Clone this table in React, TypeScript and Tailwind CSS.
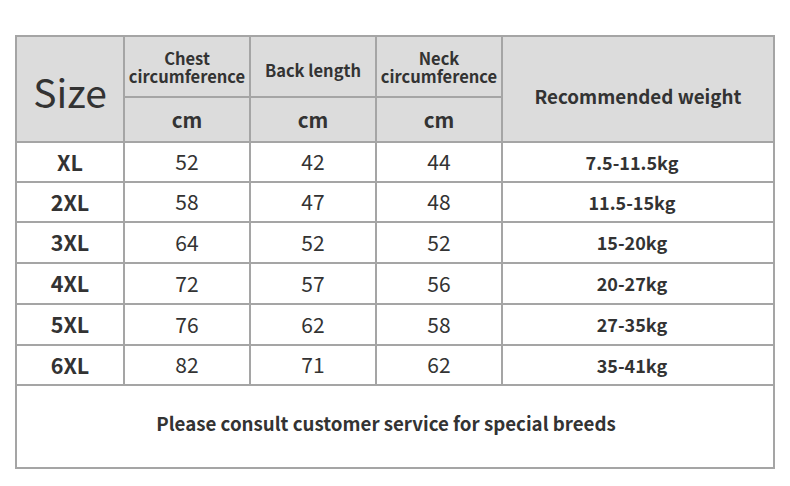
const rows = [
  { size: "XL", chest: "52", back: "42", neck: "44", weight: "7.5-11.5kg", h: "h-[38px]" },
  { size: "2XL", chest: "58", back: "47", neck: "48", weight: "11.5-15kg", h: "h-[38px]" },
  { size: "3XL", chest: "64", back: "52", neck: "52", weight: "15-20kg", h: "h-[39px]" },
  { size: "4XL", chest: "72", back: "57", neck: "56", weight: "20-27kg", h: "h-[39px]" },
  { size: "5XL", chest: "76", back: "62", neck: "58", weight: "27-35kg", h: "h-[39px]" },
  { size: "6XL", chest: "82", back: "71", neck: "62", weight: "35-41kg", h: "h-[38px]" },
];

const font = { fontFamily: '"Noto Sans CJK SC", "Noto Sans", sans-serif' };

export default function App() {
  return (
    <div className="w-[790px] h-[486px] bg-white pt-[35px] pl-[15px] text-[#333]" style={font}>
      <div className="grid grid-cols-[106px_124px_124px_124px_270px] gap-[2px] p-[2px] bg-[#a5a5a5] w-[760px]">
        {/* header */}
        <div className="row-span-2 bg-[#dcdcdc] flex items-center justify-center text-[39px] leading-none pt-[4px]">
          Size
        </div>
        <div className="h-[59px] bg-[#dcdcdc] flex items-center justify-center text-center text-[16.5px] font-bold leading-[18px]">
          <p>
            Chest
            <br />
            circumference
          </p>
        </div>
        <div className="h-[59px] bg-[#dcdcdc] flex items-center justify-center text-[16.5px] font-bold pt-[8px]">
          Back length
        </div>
        <div className="h-[59px] bg-[#dcdcdc] flex items-center justify-center text-center text-[16.5px] font-bold leading-[18px]">
          <p>
            Neck
            <br />
            circumference
          </p>
        </div>
        <div className="row-span-2 bg-[#dcdcdc] flex items-center justify-center text-[18.8px] font-bold pt-[14px]">
          Recommended weight
        </div>
        <div className="h-[43px] bg-[#dcdcdc] flex items-center justify-center text-[20.5px] font-bold">cm</div>
        <div className="h-[43px] bg-[#dcdcdc] flex items-center justify-center text-[20.5px] font-bold">cm</div>
        <div className="h-[43px] bg-[#dcdcdc] flex items-center justify-center text-[20.5px] font-bold">cm</div>

        {rows.map((r) => (
          <div key={r.size} className="contents">
            <div className={`${r.h} bg-white flex items-center justify-center text-[21.5px] font-bold`}>{r.size}</div>
            <div className={`${r.h} bg-white flex items-center justify-center text-[21px]`}>{r.chest}</div>
            <div className={`${r.h} bg-white flex items-center justify-center text-[21px]`}>{r.back}</div>
            <div className={`${r.h} bg-white flex items-center justify-center text-[21px]`}>{r.neck}</div>
            <div className={`${r.h} bg-white flex items-center justify-center text-[18px] font-bold pr-3`}>{r.weight}</div>
          </div>
        ))}

        <div className="col-span-5 h-[81px] bg-white flex items-center justify-center text-[18.7px] font-bold pr-[18px] pb-[6px]">
          Please consult customer service for special breeds
        </div>
      </div>
    </div>
  );
}
